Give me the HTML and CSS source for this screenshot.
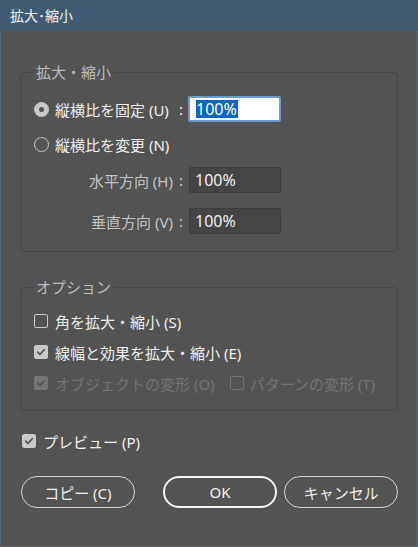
FILE: index.html
```html
<!DOCTYPE html>
<html lang="ja">
<head>
<meta charset="utf-8">
<title>拡大・縮小</title>
<link rel="stylesheet" href="styles.css">
</head>
<body>
<div class="window">
  <div class="titlebar">拡大･縮小</div>
  <div class="content">
    <fieldset class="group group-scale">
      <legend>拡大・縮小</legend>
      <div class="row row1">
        <div class="lab">
          <span class="radio on"></span>
          <span class="txt">縦横比を固定 (U)</span>
          <span class="colon">:</span>
        </div>
        <div class="input focus"><span class="sel">100%</span></div>
      </div>
      <div class="row row2">
        <div class="lab">
          <span class="radio"></span>
          <span class="txt">縦横比を変更 (N)</span>
        </div>
      </div>
      <div class="row row3">
        <div class="lab right"><span class="txt">水平方向 (H)</span><span class="colon">:</span></div>
        <div class="input">100%</div>
      </div>
      <div class="row row4">
        <div class="lab right"><span class="txt">垂直方向 (V)</span><span class="colon">:</span></div>
        <div class="input">100%</div>
      </div>
    </fieldset>

    <fieldset class="group group-opt">
      <legend>オプション</legend>
      <div class="crow">
        <span class="check"></span><span class="txt">角を拡大・縮小 (S)</span>
      </div>
      <div class="crow">
        <span class="check on"><svg viewBox="0 0 14 14"><path d="M3.2 7.2 L5.8 9.8 L10.8 4.4" /></svg></span><span class="txt">線幅と効果を拡大・縮小 (E)</span>
      </div>
      <div class="crow disabled">
        <span class="check on"><svg viewBox="0 0 14 14"><path d="M3.2 7.2 L5.8 9.8 L10.8 4.4" /></svg></span><span class="txt">オブジェクトの変形 (O)</span>
        <span class="check second"></span><span class="txt">パターンの変形 (T)</span>
      </div>
    </fieldset>

    <div class="crow preview">
      <span class="check on"><svg viewBox="0 0 14 14"><path d="M3.2 7.2 L5.8 9.8 L10.8 4.4" /></svg></span><span class="txt">プレビュー (P)</span>
    </div>

    <div class="buttons">
      <button class="btn copy">コピー (C)</button>
      <button class="btn ok">OK</button>
      <button class="btn cancel">キャンセル</button>
    </div>
  </div>
</div>
</body>
</html>
```

FILE: styles.css
```css
* { box-sizing: border-box; }
html, body {
  margin: 0;
  padding: 0;
  background: #535353;
}
body {
  font-family: "Noto Sans", "Noto Sans CJK JP", sans-serif;
  font-size: 15px;
  font-weight: 400;
  color: #f0f0f0;
}
.window {
  width: 418px;
  height: 547px;
  background: #535353;
  border-left: 1px solid #4d6a82;
  border-right: 1px solid #4d6a82;
  border-bottom: 1px solid #4d6a82;
}
.titlebar {
  height: 31px;
  margin: 0 -1px;
  background: #3f5c74;
  color: #f2f2f2;
  font-size: 14px;
  line-height: 31px;
  padding-left: 10px;
}
.content {
  padding: 32px 19px 0 19px;
}
.group {
  margin: 0;
  border: 1px solid #474747;
  border-radius: 4px;
  padding: 15px 12px 17px 12px;
  min-width: 0;
}
.group legend {
  padding: 0 3px;
  line-height: 18px;
  height: 18px;
  color: #bdbdbd;
  font-size: 15px;
}
.group-opt {
  margin-top: 26px;
  padding: 14px 12px 16px 12px;
}
.row {
  display: flex;
  align-items: center;
  height: 26px;
}
.row2 { margin-top: 9px; }
.row3 { margin-top: 10px; }
.row4 { margin-top: 15px; }
.lab {
  width: 151px;
  display: flex;
  align-items: center;
  height: 26px;
  white-space: nowrap;
}
.lab.right {
  justify-content: flex-end;
  color: #c4c4c4;
}
.lab .colon {
  margin-left: auto;
  padding-right: 1px;
}
.lab.right .colon { margin-left: 6px; }
.radio {
  width: 15px;
  height: 15px;
  border-radius: 50%;
  border: 1.5px solid #c9c9c9;
  margin-left: 1px;
  margin-right: 6px;
  flex: none;
  position: relative;
}
.radio.on {
  background: #c9c9c9;
}
.radio.on::after {
  content: "";
  position: absolute;
  left: 50%;
  top: 50%;
  width: 5px;
  height: 5px;
  margin: -2.5px 0 0 -2.5px;
  border-radius: 50%;
  background: #555;
}
.input {
  width: 92px;
  height: 26px;
  margin-left: 5px;
  background: #454545;
  border: 1px solid #3d3d3d;
  border-radius: 2px;
  color: #f0f0f0;
  font-size: 16px;
  line-height: 24px;
  padding-left: 5px;
}
.input.focus {
  margin-left: 4px;
  width: 93px;
  background: #ffffff;
  border: 2px solid #6f9ad0;
  line-height: 22px;
  padding-left: 6px;
}
.input .sel {
  background: #0b66c9;
  color: #ffffff;
  display: inline-block;
  line-height: 18px;
  padding-right: 1px;
}
.crow {
  display: flex;
  align-items: center;
  height: 22px;
  white-space: nowrap;
}
.crow + .crow { margin-top: 9px; }
.check {
  width: 14px;
  height: 14px;
  border: 1.5px solid #c9c9c9;
  border-radius: 2px;
  margin-left: 1px;
  margin-right: 7px;
  flex: none;
  display: flex;
}
.check.on {
  background: #c9c9c9;
  border-color: #c9c9c9;
}
.check svg {
  width: 100%;
  height: 100%;
  fill: none;
  stroke: #535353;
  stroke-width: 2;
  stroke-linecap: round;
  stroke-linejoin: round;
}
.crow.disabled { color: #737373; }
.crow.disabled .check { border-color: #727272; }
.crow.disabled .check.on { background: #757575; border-color: #757575; }
.crow.disabled .check.on svg { stroke: #555; }
.check.second { margin-left: 15px; margin-right: 6px; }
.preview {
  margin-top: 19px;
  padding-left: 1px;
}
.buttons {
  display: flex;
  margin-top: 24px;
  padding-left: 1px;
}
.btn {
  height: 32px;
  border-radius: 16px;
  background: transparent;
  border: 1.5px solid #d6d6d6;
  color: #f0f0f0;
  font-family: "Noto Sans", "Noto Sans CJK JP", sans-serif;
  font-size: 15px;
  padding: 0;
  width: 114px;
}
.btn.ok {
  width: 115px;
  margin-left: 28px;
  border: 2.5px solid #f4f4f4;
}
.btn.cancel {
  margin-left: 7px;
}
```
